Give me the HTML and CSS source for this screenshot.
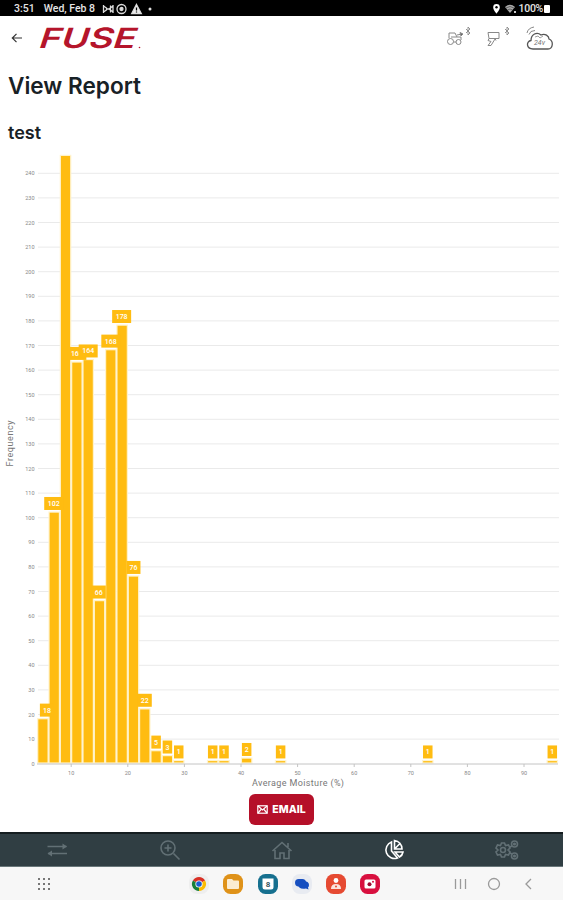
FILE: index.html
```html
<!DOCTYPE html>
<html lang="en">
<head>
    <meta charset="UTF-8">
    <meta name="viewport" content="width=device-width, initial-scale=1.0">
    <title>View Report</title>
    <link rel="stylesheet" href="styles.css">
</head>
<body>
    <div class="status-bar">
        <span class="time">3:51</span>
        <span class="date">Wed, Feb 8</span>
        <svg class="status-icons" width="52" height="12" viewBox="0 0 52 12" fill="none" stroke="#ddd" stroke-width="1.3">
            <path d="M1.500 2v8M1.500 3l3 2v2l-3 2M11 2v8M11 3l-4 3 4 3M5 6h2M8.500 2.500v7"/>
            <circle cx="19.500" cy="6" r="4.500"/>
            <circle cx="19.500" cy="6" r="1.500" fill="#ddd"/>
            <path d="M34.500 1.500l4.800 9h-9.600z" fill="#eee"/>
            <path d="M34.500 4.500v3M34.500 8.500v1" stroke="#000"/>
            <circle cx="48" cy="6" r="1.500" fill="#ddd" stroke="none"/>
        </svg>
        <div class="status-right">
            <svg width="28" height="12" viewBox="0 0 28 12">
                <path d="M5.500 1a3.300 3.300 0 0 0-3.300 3.400C2.200 7 5.500 10.500 5.500 10.500S8.800 7 8.800 4.400A3.300 3.300 0 0 0 5.500 1z" fill="#fff"/>
                <circle cx="5.500" cy="4.300" r="1.200" fill="#000"/>
                <path d="M14 4q5-4.500 10 0l-5 6z" fill="#aaa"/>
                <path d="M15 5q4-3 8 0M16.500 7q2.500-2 5 0" stroke="#444" stroke-width=".7" fill="none"/>
                <path d="M23 8h2v2h-2z" fill="#ccc"/>
            </svg>
            <span>100%</span>
            <i class="battery"></i>
        </div>
    </div>

    <header class="app-header">
        <svg class="back" width="12" height="12" viewBox="0 0 12 12" fill="none" stroke="#333" stroke-width="1.200">
            <path d="M11 6H1.500M5.500 1.800L1.300 6l4.200 4.200"/>
        </svg>
        <svg class="logo" width="103" height="24" viewBox="0 0 103 24">
            <text transform="translate(0 22.300) skewX(-6)" textLength="97" lengthAdjust="spacingAndGlyphs">FUSE</text>
            <circle cx="100.500" cy="21.500" r=".8" fill="#b5152b"/>
        </svg>
        <div class="devices">
            <svg width="26" height="24" viewBox="0 0 26 24" fill="none" stroke="#888" stroke-width="1">
                <circle cx="4.500" cy="16.500" r="3"/>
                <circle cx="12.500" cy="17" r="2.500"/>
                <path d="M3 13V8h6l2 4h4v3M7.500 17h2.500M5 12h6M11 10l5-1"/>
                <path d="M14 7.500l3 1.500-2 2z" fill="#666"/>
                <path class="bt" d="M20 4l4 4-2 2V2l2 2-4 4"/>
            </svg>
            <svg width="26" height="24" viewBox="0 0 26 24" fill="none" stroke="#888" stroke-width="1">
                <path d="M2 7.500h11v6H3zM3 13.500l-1 2 3 1-3 4h3l4-6.500M9 13.500l1 2"/>
                <path class="bt" d="M19 4l4 4-2 2V2l2 2-4 4"/>
            </svg>
            <svg width="28" height="26" viewBox="0 0 28 26" fill="none" stroke="#555" stroke-width="1.300">
                <path d="M7 24C0 24 0 16 5 15.500 5 9 11 6.500 15 10c4-2 8 1 8 4 5 2 4 10-1 10z"/>
                <path d="M1 8q1-5 7-6M3 9.500q1-4 6-4" stroke="#888" stroke-width="1"/>
                <text class="cloud-text" x="8" y="20">24v</text>
                <path d="M9 12l3-1 2 2 3-2" stroke="#888" stroke-width=".8"/>
            </svg>
        </div>
    </header>

    <main class="report">
        <h1>View Report</h1>
        <h2>test</h2>
        <svg id="chart" class="chart" width="563" height="640" viewBox="0 150 563 640"></svg>
        <button class="email">
            <svg width="11" height="9" viewBox="0 0 11 9" fill="none" stroke="#fff" stroke-width="1.200">
                <rect x=".8" y=".8" width="9.400" height="7.400"/>
                <path d="M1 1l4.500 4L10 1M1 8l3-3.500M10 8L7 4.500"/>
            </svg>
            EMAIL
        </button>
    </main>

    <nav class="tabs">
        <svg width="24" height="24" viewBox="0 0 24 24">
            <path d="M2.500 8.500h19M3 15.500h19"/>
            <path class="solid" d="M17.500 5.500l4.500 3-4.500 3zM7 12.500l-4.500 3 4.500 3z"/>
        </svg>
        <svg width="24" height="24" viewBox="0 0 24 24">
            <circle cx="10" cy="10" r="7"/>
            <path d="M15.500 15.500l6 6M10 6.500v7M6.500 10h7"/>
        </svg>
        <svg width="24" height="24" viewBox="0 0 24 24">
            <path d="M2.500 13L12 4.500l9.500 8.500M5 12v8.500h5V15h4v5.500h5V12M18 9V5"/>
        </svg>
        <svg class="active" width="24" height="24" viewBox="0 0 24 24">
            <path d="M9.500 4a8.500 8.500 0 1 0 6 16L9.500 13z"/>
            <path d="M12.500 2.500a8.500 8.500 0 0 1 7.500 8.500h-7.500zM13 14h8a7 7 0 0 1-3.500 5zM13 10.500l5-5"/>
        </svg>
        <svg width="26" height="24" viewBox="0 0 26 24">
            <path d="M7.500 5h3l1 2.500 3-.5 1.500 3-2 2 2 2-1.500 3-3-.5-1 2.500h-3l-1-2.500-3 .5L2 14l2-2-2-2 1.500-3 3 .5z"/>
            <circle cx="9" cy="12" r="2.500"/>
            <circle cx="20.500" cy="6" r="3"/>
            <circle cx="20.500" cy="18" r="3"/>
            <circle cx="20.500" cy="6" r=".8"/>
            <circle cx="20.500" cy="18" r=".8"/>
            <path d="M15 9.500l3-1.500M15 14.500l3 1.500"/>
        </svg>
    </nav>

    <footer class="system-bar">
        <svg class="app-grid" width="12" height="12" viewBox="0 0 12 12" fill="#777">
            <path d="M0 0h2v2H0zM5 0h2v2H5zM10 0h2v2h-2zM0 5h2v2H0zM5 5h2v2H5zM10 5h2v2h-2zM0 10h2v2H0zM5 10h2v2H5zM10 10h2v2h-2z"/>
        </svg>
        <div class="apps">
            <svg width="20" height="20" viewBox="0 0 20 20">
                <rect width="20" height="20" rx="8" fill="#eee"/>
                <path d="M10 10L3.900 6.500a7 7 0 0 1 12.200 0z" fill="#d93025"/>
                <path d="M10 10L3.900 6.500A7 7 0 0 0 10 17l3-5z" fill="#188038"/>
                <path d="M10 10l6.100-3.500A7 7 0 0 1 10 17z" fill="#fbbc04"/>
                <circle cx="10" cy="10" r="3.600" fill="#fff"/>
                <circle cx="10" cy="10" r="2.800" fill="#1a5fd0"/>
            </svg>
            <svg width="20" height="20" viewBox="0 0 20 20">
                <rect width="20" height="20" rx="7.500" fill="#df9219"/>
                <path d="M5 5h4l1.500 1.500H15q1 0 1 1V14q0 1-1 1H5q-1 0-1-1V6q0-1 1-1z" fill="#fbecd2"/>
            </svg>
            <svg width="20" height="20" viewBox="0 0 20 20">
                <rect width="20" height="20" rx="7.500" fill="#16708f"/>
                <path d="M4.500 4.500h11V13q0 2.500-2.500 2.500H7q-2.500 0-2.500-2.500z" fill="#fff"/>
                <text class="cal-day" x="10" y="13">8</text>
            </svg>
            <svg width="20" height="20" viewBox="0 0 20 20">
                <rect width="20" height="20" rx="8" fill="#e8ebf1"/>
                <rect x="3" y="5" width="11" height="7.500" rx="3.700" fill="#164fc0"/>
                <path d="M6 10q0-3 5-3 6 0 6 4 0 1.500-1 2.500l.5 2-2.500-1q-8 1.200-8-4.500z" fill="#164fc0"/>
            </svg>
            <svg width="20" height="20" viewBox="0 0 20 20">
                <rect width="20" height="20" rx="7.500" fill="#e64a32"/>
                <circle cx="10" cy="6.500" r="2.400" fill="#fff"/>
                <path d="M5 15q0-5 5-5t5 5z" fill="#fbe3dd"/>
                <circle cx="10" cy="12.500" r="1" fill="#e64a32"/>
            </svg>
            <svg width="20" height="20" viewBox="0 0 20 20">
                <rect width="20" height="20" rx="7.500" fill="#d8103f"/>
                <rect x="4.500" y="5.500" width="11" height="9" rx="1.500" fill="#fff"/>
                <circle cx="9.500" cy="10.300" r="2" fill="#9c0b32"/>
                <circle cx="13" cy="7.700" r="1" fill="#d8103f"/>
            </svg>
        </div>
        <svg class="sys-nav" width="80" height="14" viewBox="0 0 80 14" fill="none" stroke="#9a9a9a" stroke-width="1.300">
            <path d="M2.500 2v10M7.500 2v10M12.500 2v10"/>
            <circle cx="41" cy="7" r="5.500"/>
            <path d="M78 2l-5 5 5 5"/>
        </svg>
    </footer>

    <script>
        // [moisture, frequency, label center offset]
        const data = [
            [5, 18, 4], [7, 102, -.5], [9, 247, 0], [11, 163, 0], [13, 164, 0],
            [15, 66, -.7], [17, 168, 0], [19, 178, -.5], [21, 76, 0], [23, 22, 0],
            [25, 5, 0], [27, 3, 0], [29, 1, 0], [35, 1, 0], [37, 1, 0],
            [41, 2, 0], [47, 1, 0], [73, 1, 0], [95, 1, 0]
        ];
        const px = v => 71.2 + (v - 10) * 5.66;
        const py = v => 763.7 - v * 2.46;
        let out = '';

        for (let v = 0; v <= 240; v += 10) {
            if (v) out += `<line class="grid" x1="38" x2="559" y1="${py(v)}" y2="${py(v)}"/>`;
            out += `<text class="tick" x="34.500" y="${py(v) + 2}" text-anchor="end">${v}</text>`;
        }
        for (let v = 10; v <= 90; v += 10) {
            out += `<line class="axis" x1="${px(v)}" x2="${px(v)}" y1="764" y2="767"/>`;
            out += `<text class="tick" x="${px(v)}" y="775" text-anchor="middle">${v}</text>`;
        }
        for (const [x, y] of data) {
            out += `<rect class="bar" x="${px(x) - 5.2}" y="${py(y) - .7}" width="10.400" height="${y * 2.46}"/>`;
        }
        out += '<line class="axis" x1="37" x2="558" y1="764" y2="764"/>';
        for (const [x, y, dx] of data) {
            if (y > 240) continue;
            const w = [0, 9.5, 14, 19][String(y).length];
            const cx = px(x) + dx;
            // very short bars keep their label just above the axis
            const top = Math.min(py(y) - 15.8, 746);
            out += `<rect class="label-box" x="${cx - w / 2}" y="${top}" width="${w}" height="13"/>`;
            out += `<text class="label" x="${cx}" y="${top + 9}" text-anchor="middle">${y}</text>`;
        }
        out += '<text class="title" x="298" y="786" text-anchor="middle" textLength="92">Average Moisture (%)</text>';
        out += '<text class="title" transform="translate(13 443.500) rotate(-90)" text-anchor="middle" textLength="46">Frequency</text>';
        document.getElementById('chart').innerHTML = out;
    </script>
</body>
</html>
```

FILE: styles.css
```css
body {
    margin: 0;
    width: 563px;
    height: 900px;
    overflow: hidden;
    display: flex;
    flex-direction: column;
    background-color: #fff;
    color: #182126;
    font-family: Inter, Roboto, sans-serif;
}
svg {
    display: block;
    flex: none;
}
.status-bar {
    height: 16px;
    box-sizing: border-box;
    padding: 2px 13px 0 14px;
    display: flex;
    align-items: center;
    background-color: #000;
    color: #e4e4e4;
    font: 500 10.5px/14px Roboto, sans-serif;
}
.date {
    margin-left: 9px;
}
.status-icons {
    margin-left: 7px;
}
.status-right {
    margin-left: auto;
    display: flex;
    align-items: center;
    letter-spacing: -0.3px;
}
.battery {
    width: 6px;
    height: 8px;
    margin-left: 1px;
    border-radius: 1px;
    background-color: #fff;
}
.app-header {
    height: 44px;
    box-sizing: border-box;
    padding: 0 9px 0 11px;
    display: flex;
    align-items: center;
}
.logo {
    margin-left: 16px;
    overflow: visible;
}
.logo text {
    font: italic 600 28px Inter, sans-serif;
    fill: #b5152b;
}
.devices {
    margin-left: auto;
    display: flex;
    gap: 14px;
}
.devices .bt {
    stroke: #888;
    stroke-width: 0.9;
}
.cloud-text {
    font: italic 7px Roboto, sans-serif;
    fill: #777;
    stroke: none;
}
.report {
    height: 772px;
    display: flex;
    flex-direction: column;
}
h1 {
    margin: 11px 0 0 8px;
    font-size: 22.6px;
    line-height: 30px;
    font-weight: 600;
}
h2 {
    margin: 20px 0 0 8px;
    font-size: 18px;
    line-height: 24px;
    font-weight: 600;
}
.chart {
    margin-top: 5px;
}
.grid {
    stroke: #eaeaea;
    stroke-width: 1;
}
.axis {
    stroke: #c4c4c4;
    stroke-width: 1;
}
.tick {
    font: 5.5px Roboto, sans-serif;
    fill: #888;
}
.bar {
    fill: #ffbc11;
    stroke: #fff3cd;
    stroke-width: 1.2;
}
.label-box {
    fill: #ffbc11;
}
.label {
    font: 500 7px Roboto, sans-serif;
    fill: #fff;
}
.title {
    font: 9px Roboto, sans-serif;
    fill: #777;
}
.email {
    width: 65px;
    height: 31px;
    margin: 4px 0 0 249px;
    padding: 0;
    display: flex;
    align-items: center;
    justify-content: center;
    gap: 4px;
    flex: none;
    border: none;
    border-radius: 6px;
    background-color: #b51029;
    color: #fff;
    font: 800 10.5px Inter, sans-serif;
}
.tabs {
    height: 35px;
    box-sizing: border-box;
    border-top: 2px solid #151d20;
    border-bottom: 1px solid #69777a;
    padding-left: 1px;
    display: grid;
    grid-template-columns: repeat(5, 1fr);
    align-items: center;
    justify-items: center;
    background-color: #303e43;
}
.tabs svg {
    fill: none;
    stroke: #627075;
    stroke-width: 1.6;
}
.tabs .solid {
    fill: #627075;
    stroke: none;
}
.tabs .active {
    stroke: #fff;
}
.system-bar {
    height: 33px;
    box-sizing: border-box;
    padding: 0 30px 0 38px;
    display: flex;
    align-items: center;
    background-color: #f7f7f7;
}
.apps {
    display: flex;
    gap: 14.3px;
    margin-left: 139px;
}
.sys-nav {
    margin-left: auto;
}
.cal-day {
    font: 700 8px Roboto, sans-serif;
    fill: #3b545e;
    text-anchor: middle;
}
```
